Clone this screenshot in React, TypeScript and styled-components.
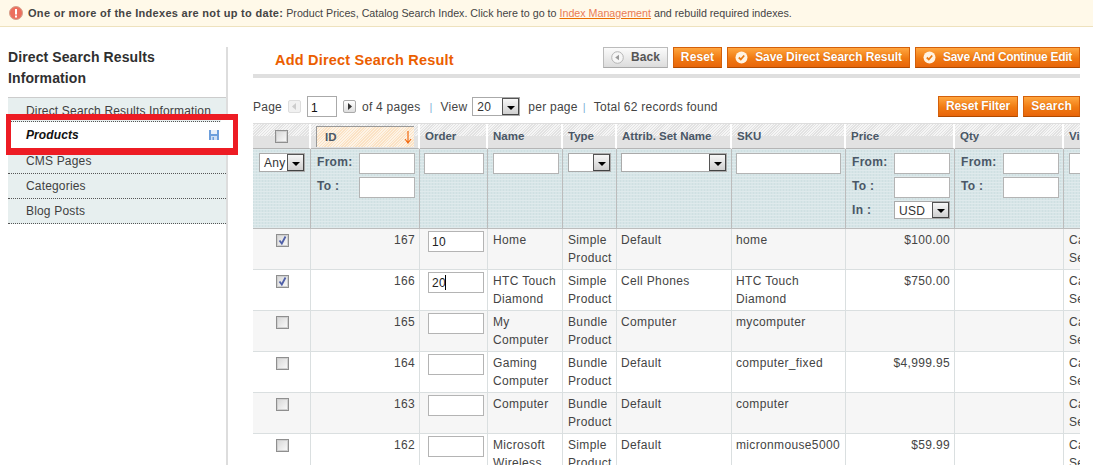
import React from "react";
import styled, { createGlobalStyle } from "styled-components";

const Global = createGlobalStyle`
  html, body { margin: 0; padding: 0; background: #fff; }
  body { font-family: "Liberation Sans", Arial, sans-serif; font-size: 12px; color: #444; }
  * { box-sizing: border-box; }
`;

const Page = styled.div`
  width: 1093px; height: 465px; overflow: hidden; display: flex; flex-direction: column;
`;
const Notice = styled.div`
  height: 27px; flex: none; background: #fff9e9; border-bottom: 1px solid #eee2be;
  display: flex; align-items: center; padding: 0 0 1px 9px; gap: 5px;
  font-size: 10.7px; color: #444; white-space: pre;
`;
const NoticeBold = styled.b`font-size: 11px; font-weight: bold; letter-spacing: 0.3px;`;
const NoticeLink = styled.a`color: #ea7b55; text-decoration: underline; text-decoration-color: #ea6d00;`;
const Body = styled.div`display: flex; flex: 1; min-height: 0; padding: 20px 13px 0 8px; gap: 25px;`;

const Side = styled.aside`
  position: relative; width: 220px; flex: none; border-right: 2px solid #ddd;
`;
const SideTitle = styled.h3`
  margin: 0 0 8px; font-size: 14px; line-height: 21px; font-weight: bold; color: #2f2f2f; letter-spacing: .1px;
`;
const Tabs = styled.ul`
  list-style: none; margin: 0; padding: 0; border-top: 1px solid #ccc; background: #e7efef;
`;
const Tab = styled.li<{ $h: number; $active?: boolean; $top?: number }>`
  height: ${(p) => p.$h}px; display: flex; align-items: center; justify-content: space-between;
  padding: ${(p) => p.$top ?? 0}px 7px 0 18px; border-bottom: 1px dotted #555; font-size: 12px; letter-spacing: .17px; color: #3f3f3f;
  ${(p) => p.$active && "background:#fff; font-weight:bold; font-style:italic; color:#111; letter-spacing:.1px;"}
`;
const Highlight = styled.div`
  position: absolute; left: -2px; top: 67px; width: 232px; height: 41px;
  border: solid #ed1c24; border-width: 6px 5px 7px 5px; pointer-events: none;
  &::after { content: ""; position: absolute; top: 0; bottom: 0; right: 0; width: 12px; background: #fff; }
`;

const Main = styled.main`flex: 1; min-width: 0; display: flex; flex-direction: column;`;
const Head = styled.div`
  display: flex; flex: none; justify-content: space-between; align-items: flex-start;
  height: 31px; border-bottom: 4px solid #dfdfdf; padding-left: 22px;
`;
const Title = styled.h1`
  margin: 5px 0 0; font-size: 14.5px; line-height: 17px; font-weight: bold; color: #eb5e00; letter-spacing: .2px;
`;
const Buttons = styled.div`display: flex; gap: 5px;`;
const Btn = styled.button<{ $w: number; $grey?: boolean; $ls?: number }>`
  width: ${(p) => p.$w}px; height: 21px; padding: 0 0 1px; display: flex; align-items: center; justify-content: center; gap: 7px;
  font: bold 12px "Liberation Sans", Arial, sans-serif; letter-spacing: ${(p) => p.$ls ?? 0.12}px; white-space: nowrap;
  color: ${(p) => (p.$grey ? "#555" : "#fff")};
  border: 1px solid ${(p) => (p.$grey ? "#bbb" : "#d4600a")};
  border-bottom-color: ${(p) => (p.$grey ? "#aaa" : "#b04a00")};
  background: ${(p) => (p.$grey ? "linear-gradient(#fbfbfb,#dcdcdc)" : "linear-gradient(#ffa63f,#f07a12 55%,#e8650a)")};
  ${(p) => !p.$grey && "text-shadow: 0 0 1px #c95b00;"}
`;

const PagerRow = styled.div`
  display: flex; flex: none; justify-content: space-between; height: 21px; margin: 18px 0 6px;
`;
const Pager = styled.div`
  display: flex; align-items: center; font-size: 12px; letter-spacing: .24px; color: #444; white-space: nowrap;
`;
const Gap = styled.span<{ $w: number }>`display: inline-block; width: ${(p) => p.$w}px; flex: none;`;
const Sep = styled.span`color: #7fb2d8; font-size: 11px;`;
const PageBtn = styled.span<{ $off?: boolean }>`
  width: 13px; height: 13px; flex: none; display: flex; align-items: center; justify-content: center;
  border: 1px solid ${(p) => (p.$off ? "#ddd" : "#aaa")}; border-radius: 2px;
  background: ${(p) => (p.$off ? "#f1f1f1" : "linear-gradient(#fff,#ddd)")};
`;
const PageInput = styled.input`
  width: 30px; height: 21px; padding: 2px 3px 0; border: 1px solid #aaa; background: #fff;
  font: 12px "Liberation Sans", Arial, sans-serif; color: #111; letter-spacing: .3px;
`;

const SelectShell = styled.span<{ $w: number; $h?: number }>`
  display: inline-flex; width: ${(p) => p.$w}px; height: ${(p) => p.$h ?? 19}px; flex: none;
  align-items: stretch; border: 1px solid #aaa; background: #fff; vertical-align: top;
  font-size: 12px; font-weight: normal; letter-spacing: .3px; color: #333; line-height: 17px;
`;
const SelectText = styled.span`flex: 1; padding: 1px 0 0 4px; overflow: hidden;`;
const SelectArrow = styled.span`
  width: 17px; flex: none; margin: 0; border: 1px solid #555; border-right-color: #444; border-bottom-color: #444;
  background: linear-gradient(#f7f7f7,#cfcfcf); display: flex; align-items: center; justify-content: center;
  &::after { content: ""; margin-top: 2px; border: 4px solid transparent; border-top-color: #000; border-bottom: 0; }
`;

const TableWrap = styled.div`flex: 1; min-height: 0; overflow: hidden; border-top: 1px solid #ddd;`;
const Grid = styled.table`
  border-collapse: separate; border-spacing: 0; table-layout: fixed; width: 891px;
  font-size: 12px; letter-spacing: .35px; color: #444;
`;
const HeadCell = styled.th`
  height: 25px; padding: 0 4px 0 5px; text-align: left; vertical-align: middle; font-size: 11.5px; font-weight: bold;
  color: #4a5766; letter-spacing: 0; white-space: nowrap; overflow: hidden;
  border-right: 2px solid #fff; border-bottom: 1px solid #b5b5b5;
  background:
    linear-gradient(transparent 50%, #e2e2e2 50%),
    repeating-linear-gradient(135deg, #f5f5f5 0 1px, #e2e2e2 1px 2px);
`;
const SortCell = styled(HeadCell)`padding: 2px 4px 1px 5px;`;
const SortTag = styled.span`
  display: flex; height: 21px; align-items: center; justify-content: space-between; padding: 0 2px 0 8px;
  border-left: 1px solid #999; border-top: 1px solid #999;
  background: repeating-linear-gradient(135deg, #fdf3e6 0 1px, #fbe2c4 1px 2px);
`;
const FilterCell = styled.td<{ $pad?: string }>`
  height: 80px; padding: ${(p) => p.$pad ?? "4px 4px 0 5px"}; vertical-align: top; border-right: 1px solid #bcbcbc; border-bottom: 1px solid #bcbcbc;
  background-color: #d7e5e7;
  background-image: linear-gradient(#dfeaec 1px, transparent 1px), linear-gradient(90deg, #cfe0e2 1px, transparent 1px);
  background-size: 3px 3px; overflow: hidden; white-space: nowrap;
`;
const RangeRow = styled.div`
  display: flex; justify-content: space-between; align-items: flex-start; height: 24px;
  padding-left: 1px; font-weight: bold; color: #4a5766; font-size: 12px; letter-spacing: .3px; line-height: 18px;
`;
const Field = styled.input<{ $w: number }>`
  display: block; width: ${(p) => p.$w}px; height: 21px; padding: 0 3px; background: #fff; border: 1px solid #b4b4b4;
  font: 12px "Liberation Sans", Arial, sans-serif; color: #222; letter-spacing: .3px;
`;
const Row = styled.tr<{ $odd: boolean }>`background: ${(p) => (p.$odd ? "#f6f6f6" : "#fff")};`;
const Cell = styled.td<{ $align?: string; $pad?: string }>`
  height: 41px; padding: ${(p) => p.$pad ?? "2px 4px 2px 5px"}; vertical-align: top; line-height: 18px;
  text-align: ${(p) => p.$align ?? "left"}; border-right: 1px solid #dadfe0; border-bottom: 1px solid #dadfe0;
  overflow: hidden;
`;
const OrderBox = styled.div`position: relative; width: 56px; margin-left: 4px;`;
const Caret = styled.span`position: absolute; left: 17px; top: 3px; width: 1px; height: 15px; background: #000;`;
const Check = styled.span`
  display: block; width: 13px; height: 13px; margin: 3px auto 0 auto; border: 1px solid #8f8f8f;
  background: linear-gradient(135deg,#d6d6d6,#fbfbfb); box-shadow: inset 0 0 0 1px #d0d0d0;
`;

const DownArrow = () => (
  <svg width="8" height="13" viewBox="0 0 8 13"><path d="M4 0v11M1 8l3 4 3-4" fill="none" stroke="#f26a10" strokeWidth="1.2" /></svg>
);
const BackIcon = () => (
  <svg width="13" height="13" viewBox="0 0 13 13"><circle cx="6.5" cy="6.5" r="5.8" fill="#f6f6f6" stroke="#b5b5b5" /><path d="M8 3.8v5.4L4.2 6.5z" fill="#9a9a9a" /></svg>
);
const OkIcon = () => (
  <svg width="13" height="13" viewBox="0 0 13 13"><circle cx="6.5" cy="6.5" r="6" fill="#fff3e2" /><path d="M3.8 6.5l2 2 3.4-4" fill="none" stroke="#ea7a12" strokeWidth="1.8" /></svg>
);
const ErrorIcon = () => (
  <svg width="14" height="14" viewBox="0 0 14 14"><circle cx="7" cy="7" r="6.5" fill="#ec6f5e" stroke="#d4a08c" /><rect x="6" y="3" width="2" height="5.5" fill="#fff" /><rect x="6" y="9.5" width="2" height="2" fill="#fff" /></svg>
);
const DiskIcon = () => (
  <svg width="10" height="10" viewBox="0 0 10 10"><rect width="10" height="10" fill="#6d9fdc" /><rect x="2" y="0" width="6" height="4" fill="#e8f0fa" /><rect x="2" y="6" width="6" height="4" fill="#cfe0f5" /><rect x="3.5" y="7" width="1.5" height="3" fill="#6d9fdc" /></svg>
);
const TriLeft = () => (<svg width="5" height="7" viewBox="0 0 5 7"><path d="M4 0v7L0 3.5z" fill="#ccc" /></svg>);
const TriRight = () => (<svg width="5" height="7" viewBox="0 0 5 7"><path d="M1 0v7l4-3.5z" fill="#333" /></svg>);
const Tick = () => (
  <svg width="11" height="11" viewBox="0 0 11 11" style={{ display: "block" }}><path d="M2.5 5.5l2.3 3 3.7-7" fill="none" stroke="#4f5fa8" strokeWidth="1.8" /></svg>
);

const widths = [58, 109, 68, 75, 54, 115, 114, 109, 109, 80];
const tightLeft = "2px 4px 2px 4px";
const tightFilter = "4px 4px 0 4px";
const rows = [
  { id: 167, order: "10", name: "Home", type: "Simple Product", set: "Default", sku: "home", price: "$100.00", on: true },
  { id: 166, order: "20", name: "HTC Touch Diamond", type: "Simple Product", set: "Cell Phones", sku: "HTC Touch Diamond", price: "$750.00", on: true, caret: true },
  { id: 165, order: "", name: "My Computer", type: "Bundle Product", set: "Computer", sku: "mycomputer", price: "" },
  { id: 164, order: "", name: "Gaming Computer", type: "Bundle Product", set: "Default", sku: "computer_fixed", price: "$4,999.95" },
  { id: 163, order: "", name: "Computer", type: "Bundle Product", set: "Default", sku: "computer", price: "" },
  { id: 162, order: "", name: "Microsoft Wireless", type: "Simple Product", set: "Default", sku: "micronmouse5000", price: "$59.99" },
];

export default function App() {
  return (
    <Page>
      <Global />
      <Notice>
        <ErrorIcon />
        <span>
          <NoticeBold>One or more of the Indexes are not up to date:</NoticeBold> Product Prices, Catalog Search Index. Click here to go to <NoticeLink>Index Management</NoticeLink> and rebuild required indexes.
        </span>
      </Notice>
      <Body>
        <Side>
          <SideTitle>Direct Search Results Information</SideTitle>
          <Tabs>
            <Tab $h={24} $top={2}>Direct Search Results Information</Tab>
            <Tab $h={27} $active>Products <DiskIcon /></Tab>
            <Tab $h={25}>CMS Pages</Tab>
            <Tab $h={25}>Categories</Tab>
            <Tab $h={25}>Blog Posts</Tab>
          </Tabs>
          <Highlight />
        </Side>
        <Main>
          <Head>
            <Title>Add Direct Search Result</Title>
            <Buttons>
              <Btn $w={65} $grey><BackIcon />Back</Btn>
              <Btn $w={49}>Reset</Btn>
              <Btn $w={183} $ls={-0.08}><OkIcon />Save Direct Search Result</Btn>
              <Btn $w={165} $ls={-0.3}><OkIcon />Save And Continue Edit</Btn>
            </Buttons>
          </Head>
          <PagerRow>
            <Pager>
              Page<Gap $w={6} />
              <PageBtn $off><TriLeft /></PageBtn><Gap $w={6} />
              <PageInput defaultValue="1" /><Gap $w={6} />
              <PageBtn><TriRight /></PageBtn><Gap $w={6} />
              of 4 pages<Gap $w={9} /><Sep>|</Sep><Gap $w={8} />
              View<Gap $w={5} />
              <SelectShell $w={48}><SelectText>20</SelectText><SelectArrow /></SelectShell><Gap $w={8} />
              per page<Gap $w={5} /><Sep>|</Sep><Gap $w={8} />
              Total 62 records found
            </Pager>
            <Buttons>
              <Btn $w={80} $ls={-0.1}>Reset Filter</Btn>
              <Btn $w={57}>Search</Btn>
            </Buttons>
          </PagerRow>
          <TableWrap>
            <Grid>
              <colgroup>{widths.map((w, i) => <col key={i} style={{ width: w }} />)}</colgroup>
              <thead>
                <tr>
                  <HeadCell><Check style={{ margin: "0 auto" }} /></HeadCell>
                  <SortCell><SortTag>ID<DownArrow /></SortTag></SortCell>
                  <HeadCell>Order</HeadCell>
                  <HeadCell>Name</HeadCell>
                  <HeadCell>Type</HeadCell>
                  <HeadCell>Attrib. Set Name</HeadCell>
                  <HeadCell>SKU</HeadCell>
                  <HeadCell>Price</HeadCell>
                  <HeadCell>Qty</HeadCell>
                  <HeadCell>Visibility</HeadCell>
                </tr>
                <tr>
                  <FilterCell $pad="4px 4px 0 6px"><SelectShell $w={46}><SelectText>Any</SelectText><SelectArrow /></SelectShell></FilterCell>
                  <FilterCell>
                    <RangeRow>From:<Field $w={56} /></RangeRow>
                    <RangeRow>To :<Field $w={56} /></RangeRow>
                  </FilterCell>
                  <FilterCell $pad={tightFilter}><Field $w={60} /></FilterCell>
                  <FilterCell><Field $w={66} /></FilterCell>
                  <FilterCell><SelectShell $w={43}><SelectText /><SelectArrow /></SelectShell></FilterCell>
                  <FilterCell $pad={tightFilter}><SelectShell $w={106}><SelectText /><SelectArrow /></SelectShell></FilterCell>
                  <FilterCell $pad={tightFilter}><Field $w={105} /></FilterCell>
                  <FilterCell>
                    <RangeRow>From:<Field $w={56} /></RangeRow>
                    <RangeRow>To :<Field $w={56} /></RangeRow>
                    <RangeRow>In :<SelectShell $w={56} $h={18}><SelectText>USD</SelectText><SelectArrow /></SelectShell></RangeRow>
                  </FilterCell>
                  <FilterCell>
                    <RangeRow>From:<Field $w={56} /></RangeRow>
                    <RangeRow>To :<Field $w={56} /></RangeRow>
                  </FilterCell>
                  <FilterCell><Field $w={60} /></FilterCell>
                </tr>
              </thead>
              <tbody>
                {rows.map((r, i) => (
                  <Row key={r.id} $odd={i % 2 === 0}>
                    <Cell><Check>{r.on && <Tick />}</Check></Cell>
                    <Cell $align="right">{r.id}</Cell>
                    <Cell $pad="2px 0 0 4px">
                      <OrderBox>
                        <Field $w={56} defaultValue={r.order} />
                        {r.caret && <Caret />}
                      </OrderBox>
                    </Cell>
                    <Cell>{r.name}</Cell>
                    <Cell>{r.type}</Cell>
                    <Cell $pad={tightLeft}>{r.set}</Cell>
                    <Cell $pad={tightLeft}>{r.sku}</Cell>
                    <Cell $align="right">{r.price}</Cell>
                    <Cell />
                    <Cell>Catalog, Search</Cell>
                  </Row>
                ))}
              </tbody>
            </Grid>
          </TableWrap>
        </Main>
      </Body>
    </Page>
  );
}
